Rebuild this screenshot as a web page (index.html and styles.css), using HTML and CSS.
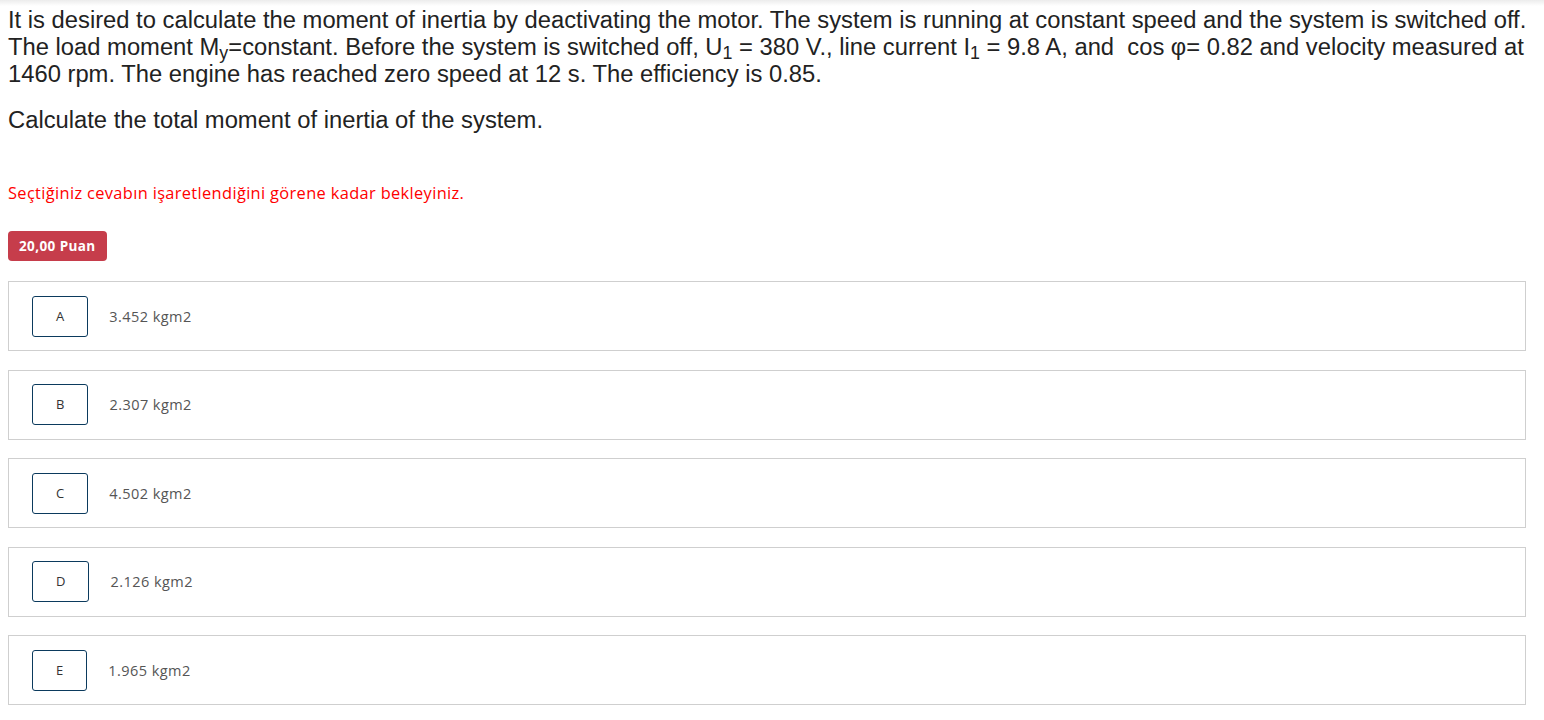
FILE: index.html
```html
<!DOCTYPE html>
<html lang="tr">
<head>
<meta charset="utf-8">
<title>Soru</title>
<link rel="stylesheet" href="styles.css">
</head>
<body>
<div class="topshade"></div>
<main class="page">
  <div class="question">
    <p class="q-line">It is desired to calculate the moment of inertia by deactivating the motor. The system is running at constant speed and the system is switched off. The load moment M<sub>y</sub>=constant. Before the system is switched off, U<sub>1</sub> = 380 V., line current I<sub>1</sub> = 9.8 A, and &nbsp;cos φ= 0.82 and velocity measured at 1460 rpm. The engine has reached zero speed at 12 s. The efficiency is 0.85.</p>
    <p class="q-line q-ask">Calculate the total moment of inertia of the system.</p>
  </div>
  <p class="warn">Seçtiğiniz cevabın işaretlendiğini görene kadar bekleyiniz.</p>
  <div class="badge">20,00 Puan</div>
  <ul class="options">
    <li class="option"><span class="letter">A</span><span class="answer">3.452 kgm2</span></li>
    <li class="option"><span class="letter">B</span><span class="answer">2.307 kgm2</span></li>
    <li class="option"><span class="letter">C</span><span class="answer">4.502 kgm2</span></li>
    <li class="option"><span class="letter">D</span><span class="answer">2.126 kgm2</span></li>
    <li class="option"><span class="letter">E</span><span class="answer">1.965 kgm2</span></li>
  </ul>
</main>
</body>
</html>
```
FILE: styles.css
```css
html, body {
  margin: 0;
  padding: 0;
  background: #fff;
}
.topshade {
  position: absolute;
  left: 0;
  top: 0;
  right: 0;
  height: 6px;
  background: linear-gradient(#ececec, rgba(255,255,255,0));
}
.page {
  padding: 6px 18px 0 8px;
}
.question {
  font-family: "Liberation Sans", Arial, sans-serif;
  font-size: 23.77px;
  line-height: 27px;
  color: #222;
  margin-right: -14px;
}
.q-line {
  margin: 0;
}
.q-line sub {
  font-size: 0.75em;
  line-height: 0;
  vertical-align: -0.25em;
}
.q-ask {
  margin-top: 19px;
}
.warn {
  font-family: "Open Sans", "Noto Sans", sans-serif;
  font-size: 16.4px;
  letter-spacing: 0.35px;
  color: #ff0000;
  margin: 50px 0 0 0;
  line-height: 20px;
}
.badge {
  display: inline-block;
  margin-top: 28px;
  background: #c63d4b;
  color: #fff;
  font-family: "Open Sans", "Noto Sans", sans-serif;
  font-weight: 700;
  font-size: 13.5px;
  letter-spacing: 0.4px;
  line-height: 30px;
  height: 30px;
  padding: 0 11px;
  border-radius: 4px;
}
.options {
  list-style: none;
  margin: 20px 0 0 0;
  padding: 0;
  display: flex;
  flex-direction: column;
  gap: 18.5px;
}
.option {
  display: flex;
  align-items: center;
  border: 1px solid #cfcfcf;
  height: 68px;
  padding: 0 0 0 23px;
  font-family: "Open Sans", "Noto Sans", sans-serif;
}
.letter {
  display: inline-block;
  border: 1px solid #0b3a5d;
  border-radius: 3px;
  padding: 0 23px;
  height: 39px;
  line-height: 39px;
  font-size: 13px;
  color: #333;
  margin-right: 21px;
}
.answer {
  font-size: 14.5px;
  letter-spacing: 0.45px;
  color: #555;
}
```
